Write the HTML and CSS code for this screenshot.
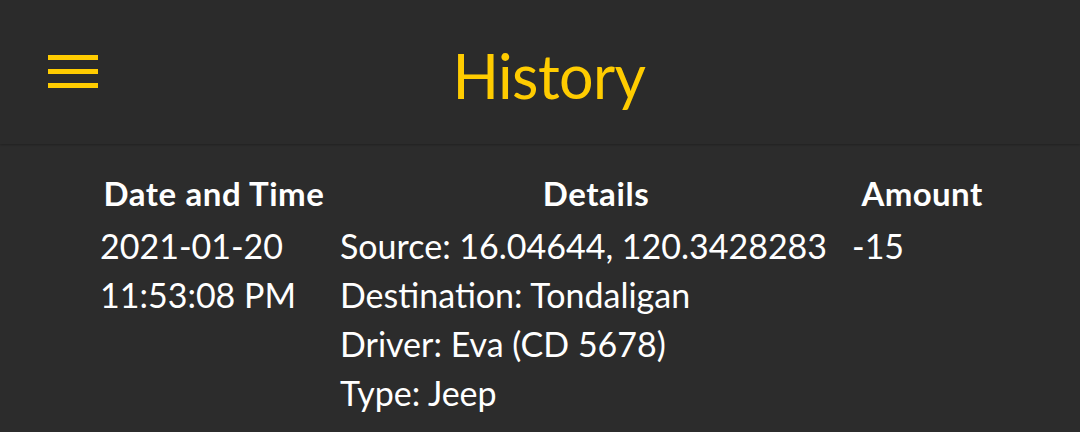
FILE: index.html
```html
<!DOCTYPE html>
<html>
<head>
<meta charset="utf-8">
<link rel="stylesheet" href="styles.css">
</head>
<body>
<header class="topbar">
  <div class="menu" aria-label="menu">
    <span class="bar"></span><span class="bar"></span><span class="bar"></span>
  </div>
  <h1 class="title">History</h1>
  <div class="spacer"></div>
</header>
<main class="history">
  <div class="row head">
    <div class="cell c1">Date and Time</div>
    <div class="cell c2">Details</div>
    <div class="cell c3">Amount</div>
  </div>
  <div class="row">
    <div class="cell c1"><div>2021-01-20</div><div>11:53:08 PM</div></div>
    <div class="cell c2">
      <div>Source: 16.04644, 120.3428283</div>
      <div>Destination: Tondaligan</div>
      <div>Driver: Eva (CD 5678)</div>
      <div>Type: Jeep</div>
    </div>
    <div class="cell c3">-15</div>
  </div>
</main>
</body>
</html>
```
FILE: styles.css
```css
html, body {
  margin: 0;
  padding: 0;
  background: #2c2c2c;
  width: 1080px;
  height: 432px;
  overflow: hidden;
  font-family: "Lato", "Open Sans", sans-serif;
  color: #ffffff;
}
.topbar {
  height: 144px;
  background: #2b2b2b;
  box-shadow: 0 1px 2px rgba(0,0,0,0.25);
  display: grid;
  grid-template-columns: 1fr auto 1fr;
  align-items: center;
  box-sizing: border-box;
}
.menu {
  display: flex;
  flex-direction: column;
  gap: 9px;
  width: 50px;
  margin-left: 48px;
  margin-top: -2px;
}
.bar {
  display: block;
  height: 5px;
  background: #ffcc00;
}
.title {
  margin: 0;
  font-weight: 400;
  font-size: 61px;
  color: #ffcc00;
  letter-spacing: -0.6px;
  padding-left: 18px;
  margin-top: 6px;
}
.history {
  padding: 25px 0 0 100px;
}
.row {
  display: grid;
  grid-template-columns: 240px 512px 140px;
  font-size: 34px;
  line-height: 49px;
  white-space: nowrap;
}
.head {
  font-weight: 700;
  font-size: 33px;
  letter-spacing: 0.6px;
  text-align: center;
  padding-bottom: 3px;
}
.head .c1 {
  padding-right: 12px;
}
.head .c3 {
  letter-spacing: 0.4px;
}
```
